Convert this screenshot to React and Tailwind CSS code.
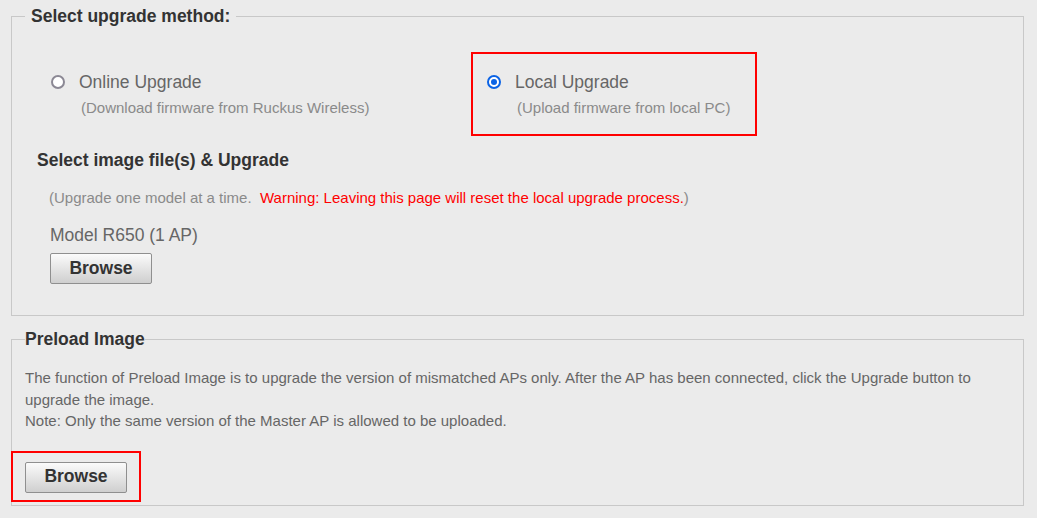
import React, { useState } from 'react';

function Radio({ checked }) {
  return (
    <span
      className={
        'inline-flex w-[14px] h-[14px] rounded-full items-center justify-center shrink-0 ' +
        (checked ? 'border-2 border-[#0b63e5] bg-white' : 'border-2 border-[#8b8894] bg-white')
      }
    >
      {checked && <span className="w-[6px] h-[6px] rounded-full bg-[#0b63e5]" />}
    </span>
  );
}

function BrowseButton() {
  return (
    <button
      type="button"
      className="w-[102px] h-[31px] rounded-[2px] border border-[#8f8f8f] bg-gradient-to-b from-[#fbfbfb] to-[#cfcfcf] text-[17.5px] font-bold text-[#333] leading-none"
    >
      Browse
    </button>
  );
}

function Option({ checked, label, note, selected, onClick }) {
  return (
    <div
      className={
        'h-[84px] border-2 pl-[14px] pt-[16px] cursor-pointer ' +
        (selected ? 'border-[#ff0000]' : 'border-transparent')
      }
      onClick={onClick}
    >
      <div className="flex items-center gap-[14px] h-[24px]">
        <Radio checked={checked} />
        <span className="text-[17.5px] text-[#666]">{label}</span>
      </div>
      <div className="pl-[30px] mt-[4px] text-[15px] text-[#8a8a8a] leading-[20px]">{note}</div>
    </div>
  );
}

export default function App() {
  const [method, setMethod] = useState('local');

  return (
    <div
      className="w-full min-h-[518px] bg-[#ebebeb] pl-[11px] pr-[13px] pt-[6px] pb-[12px]"
      style={{ fontFamily: '"Liberation Sans", Arial, sans-serif' }}
    >
      <fieldset className="border border-[#c8c8c8]">
        <legend className="ml-[13px] px-[6px] text-[17.5px] font-bold text-[#333] leading-[20px]">
          Select upgrade method:
        </legend>

        <div className="pl-[23px] pb-[31px]">
          <div className="grid grid-cols-[436px_286px] mt-[26px]">
            <Option
              checked={method === 'online'}
              label="Online Upgrade"
              note="(Download firmware from Ruckus Wireless)"
              onClick={() => setMethod('online')}
            />
            <Option
              checked={method === 'local'}
              selected
              label="Local Upgrade"
              note="(Upload firmware from local PC)"
              onClick={() => setMethod('local')}
            />
          </div>

          <h3 className="mt-[12px] pl-[2px] text-[17.5px] font-bold text-[#333] leading-[24px]">
            Select image file(s) &amp; Upgrade
          </h3>

          <p className="mt-[16px] pl-[14px] text-[15px] text-[#8a8a8a] leading-[20px] whitespace-pre">
            (Upgrade one model at a time.{'  '}
            <span className="text-[#ff0000]">Warning: Leaving this page will reset the local upgrade process.</span>)
          </p>

          <div className="mt-[15px] pl-[15px] text-[17.5px] text-[#666] leading-[24px]">Model R650 (1 AP)</div>
          <div className="mt-[6px] pl-[15px]">
            <BrowseButton />
          </div>
        </div>
      </fieldset>

      <fieldset className="mt-[13px] border border-[#c8c8c8]">
        <legend className="ml-[13px] text-[17.5px] font-bold text-[#333] leading-[20px]">Preload Image</legend>
        <div className="pl-[13px] pr-[34px] pb-[3px]">
          <p className="mt-[18px] text-[15px] text-[#666] leading-[21.5px]">
            The function of Preload Image is to upgrade the version of mismatched APs only. After the AP has been
            connected, click the Upgrade button to upgrade the image.
            <br />
            Note: Only the same version of the Master AP is allowed to be uploaded.
          </p>
          <div className="mt-[19px] -ml-[14px] w-[130px] h-[51px] border-2 border-[#ff0000] pl-[12px] pt-[9px]">
            <BrowseButton />
          </div>
        </div>
      </fieldset>
    </div>
  );
}
